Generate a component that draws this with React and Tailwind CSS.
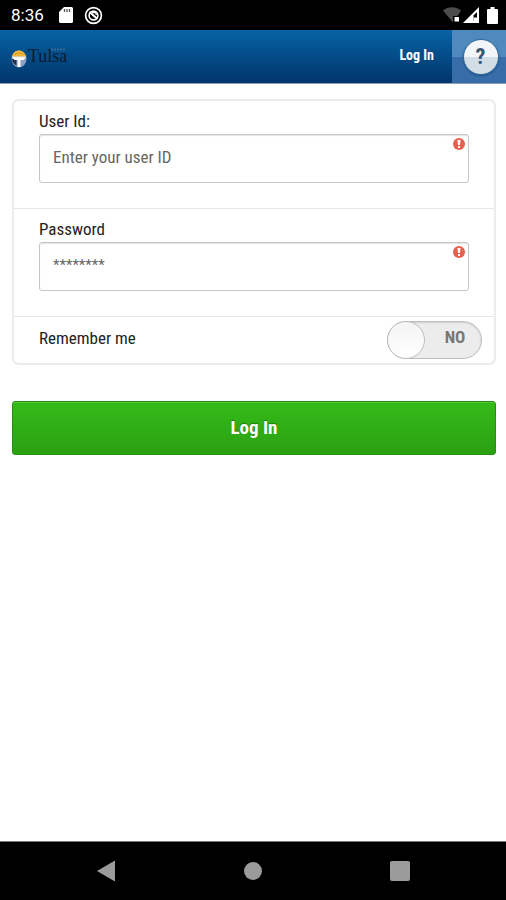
import { useState } from "react";

function StatusBar() {
  return (
    <div className="flex h-[30px] items-center justify-between bg-black pl-[11px] pr-2 text-white">
      <div className="flex items-center">
        <span className="w-12 font-['Roboto'] text-[17px] leading-6">8:36</span>
        <svg className="h-4 w-[14px]" viewBox="0 0 14 16" aria-hidden="true">
          <path d="M5 0h7.500a1.500 1.500 0 0 1 1.500 1.500v13a1.500 1.500 0 0 1-1.500 1.500h-11A1.500 1.500 0 0 1 0 14.500V5z" fill="#fff" />
          <path d="M5.500 2v3M8 2v3M10.500 2v3" stroke="#555" strokeWidth="1.300" />
        </svg>
        <svg className="ml-[11px] h-[19px] w-[19px]" viewBox="0 0 19 19" fill="none" stroke="#fff" aria-hidden="true">
          <circle cx="9.500" cy="9.500" r="7.900" strokeWidth="1.700" />
          <circle cx="9.500" cy="9.500" r="4.400" strokeWidth="1.600" />
          <path d="M5.500 6l8 7" strokeWidth="2" />
          <path d="M8 6.500h3.500l1 2.500" strokeWidth="1.400" />
        </svg>
      </div>
      <div className="flex items-center">
        <svg className="h-4 w-[18px]" viewBox="0 0 18 16" aria-hidden="true">
          <path d="M0 3.500C5.500-.8 12.500-.8 18 3.500L14.500 9H10v6.500z" fill="#4c4c4c" />
          <rect x="11.500" y="10" width="4.500" height="4.500" fill="#fff" />
        </svg>
        <svg className="ml-[2px] h-4 w-4" viewBox="0 0 16 16" aria-hidden="true">
          <path d="M16 0v16H0z" fill="#fff" />
          <path d="M14 5v9h-3.500V8.500z" fill="#000" />
          <path d="M10.500 10.500h3.500V14h-3.500z" fill="#fff" />
        </svg>
        <svg className="ml-2 h-[17px] w-[11px]" viewBox="0 0 11 17" aria-hidden="true">
          <path d="M3.500 0h4v2H10a1 1 0 0 1 1 1v13a1 1 0 0 1-1 1H1a1 1 0 0 1-1-1V3a1 1 0 0 1 1-1h2.500z" fill="#fff" />
        </svg>
      </div>
    </div>
  );
}

function Logo() {
  return (
    <div className="flex items-center">
      <svg className="mt-1 h-[18px] w-4" viewBox="0 0 16 18" aria-hidden="true">
        <ellipse cx="8" cy="9" rx="7.500" ry="8.500" fill="#8d9fc4" />
        <path d="M1 6.500C3-1.500 13-1.500 15 6.500z" fill="#f2b632" />
        <path d="M4 4.500l2-1.500M8 2.500v2M12 4.500L10 3" stroke="#c98b1c" />
        <path d="M1 6.500h14l-1 2.500H2z" fill="#f4f1e4" />
        <path d="M1 9h4.500v6.500C2.500 14 1 12 1 9z" fill="#20304d" />
        <path d="M3 8h10v2H9.500v7H6.500v-7H3z" fill="#fff" />
      </svg>
      <div className="relative ml-px">
        <span className="font-['Liberation_Serif',serif] text-[18px] leading-6 text-[#0c1c33]">Tulsa</span>
        <svg className="absolute right-[2px] top-1 h-[3px] w-[14px]" viewBox="0 0 14 3" aria-hidden="true">
          <path d="M0 1.500h14" stroke="#3c6a94" strokeWidth="2" strokeDasharray="2 1" />
        </svg>
      </div>
    </div>
  );
}

function Field({ id, label, type, placeholder }) {
  return (
    <div className="border-b border-[#e6e6e6] px-[25px] pb-[25px] pt-2">
      <label htmlFor={id} className="block text-[17px] leading-[25px] text-[#222]">
        {label}
      </label>
      <div className="relative">
        <input
          id={id}
          type={type}
          placeholder={placeholder}
          className="block h-[49px] w-full rounded-[3px] border border-[#c6c6c6] bg-white px-[13px] pb-1 text-[17px] text-[#444] shadow-[inset_0_1px_1px_#e4e4e4] outline-none placeholder:text-[#666] [&[type=password]]:text-[15px]"
        />
        <svg className="absolute right-1 top-1 h-3 w-3" viewBox="0 0 12 12" aria-hidden="true">
          <circle cx="6" cy="6" r="6" fill="#e8604f" />
          <path d="M4.500 2h3L7 7H5zM5 8h2v2H5z" fill="#fff" />
        </svg>
      </div>
    </div>
  );
}

function App() {
  const [remember, setRemember] = useState(false);

  return (
    <div className="flex min-h-screen flex-col bg-white font-['Roboto_Condensed','Roboto',sans-serif]">
      <StatusBar />

      <header className="flex h-[54px] items-stretch border-b border-[#8c9db2] bg-linear-to-b from-[#0763a5] to-[#02356b]">
        <div className="flex flex-1 items-center pl-[11px]">
          <Logo />
        </div>
        <a href="#login" className="flex items-center pb-[3px] pr-[18px] text-[14px] font-bold text-white">
          Log In
        </a>
        <button
          type="button"
          aria-label="Help"
          className="flex w-[54px] items-center justify-center bg-linear-to-b from-[#5089bd] from-50% to-[#376ea9] to-50% pl-[3px]"
        >
          <span className="flex h-9 w-9 items-center justify-center rounded-full border border-[#346a9c] bg-linear-to-b from-[#f3f6f8] from-50% to-[#d3dde5] to-50% text-[22px] font-bold text-[#355673] shadow-[0_1px_2px_#1e4c7c]">
            ?
          </span>
        </button>
      </header>

      <main className="flex-1 pl-3 pr-[10px] pt-[15px]">
        <form onSubmit={(e) => e.preventDefault()}>
          <div className="rounded-[7px] border-2 border-[#ececec]">
            <Field id="user" label="User Id:" type="text" placeholder="Enter your user ID" />
            <Field id="password" label="Password" type="password" placeholder="********" />
            <div className="flex h-[46px] items-center justify-between pl-[25px] pr-3">
              <label htmlFor="remember" className="pb-1 text-[17px] leading-[25px] text-[#222]">
                Remember me
              </label>
              <label className="relative flex h-[38px] w-[95px] cursor-pointer items-center rounded-full border border-[#bdbdbd] bg-[#ececec] shadow-[inset_0_1px_2px_#d0d0d0]">
                <input
                  id="remember"
                  type="checkbox"
                  checked={remember}
                  onChange={(e) => setRemember(e.target.checked)}
                  className="peer sr-only"
                />
                <span className="-ml-px h-[38px] w-[38px] rounded-full border border-[#bdbdbd] bg-linear-to-b from-[#f4f4f4] to-white peer-checked:order-2 peer-checked:-mr-px" />
                <span className="flex-1 pb-1 pl-1 text-center text-[17px] font-bold text-[#777]">
                  {remember ? "YES" : "NO"}
                </span>
              </label>
            </div>
          </div>

          <button
            type="submit"
            className="mt-9 h-[54px] w-full rounded-[3px] border border-[#259011] bg-linear-to-b from-[#34bb18] to-[#2ba012] text-[19px] font-bold text-white shadow-[inset_0_1px_0_#55c63a] [text-shadow:0_-1px_1px_#1c7a0c]"
          >
            Log In
          </button>
        </form>
      </main>

      <nav className="flex h-[59px] items-center justify-between border-t border-[#777] bg-black px-24">
        <button type="button" aria-label="Back">
          <svg className="h-[22px] w-5" viewBox="0 0 20 22" aria-hidden="true">
            <path d="M19 .5v21L1 11z" fill="#9b9b9b" />
          </svg>
        </button>
        <button type="button" aria-label="Home" className="h-[18px] w-[18px] rounded-full bg-[#9b9b9b]" />
        <button type="button" aria-label="Recent apps" className="h-5 w-5 rounded-[2px] bg-[#9b9b9b]" />
      </nav>
    </div>
  );
}

export default App;
